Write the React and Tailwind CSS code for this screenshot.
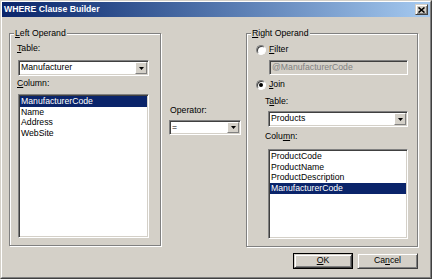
import React from "react";

const sunken =
  "border border-t-[#808080] border-l-[#808080] border-r-white border-b-white shadow-[inset_1px_1px_0_#404040,inset_-1px_-1px_0_#d4d0c8]";
const raised =
  "border border-t-[#d4d0c8] border-l-[#d4d0c8] border-r-[#404040] border-b-[#404040] shadow-[inset_1px_1px_0_#fff,inset_-1px_-1px_0_#808080]";
const etched = "border border-[#808080] shadow-[inset_1px_1px_0_#fff,1px_1px_0_#fff]";

function Arrow() {
  return (
    <svg width="5" height="3" viewBox="0 0 5 3">
      <path d="M0 0h5L2.5 3z" fill="#000" />
    </svg>
  );
}

function Combo({ value, className }) {
  return (
    <div className={`flex bg-white ${sunken} ${className}`}>
      <div className="flex-1 pl-[2px] flex items-center truncate">{value}</div>
      <div className="w-[12px] m-px flex items-center justify-center bg-[#d4d0c8] border border-t-white border-l-white border-r-[#808080] border-b-[#808080]">
        <Arrow />
      </div>
    </div>
  );
}

function ListBox({ items, selected, className }) {
  return (
    <div className={`bg-white p-px ${sunken} ${className}`}>
      {items.map((item, i) => (
        <div
          key={item}
          className={`h-[10.7px] leading-[10.7px] pl-px ${i === selected ? "bg-[#0a246a] text-white" : ""}`}
        >
          {item}
        </div>
      ))}
    </div>
  );
}

function Radio({ checked, children }) {
  return (
    <div className="flex items-center h-[11px] gap-[3px]">
      <div className="w-[10px] h-[10px] rounded-full bg-white border border-t-[#808080] border-l-[#808080] border-r-white border-b-white shadow-[inset_1px_1px_0_#404040] flex items-center justify-center">
        {checked && <div className="w-[4px] h-[4px] rounded-full bg-black" />}
      </div>
      <span className="leading-[11px]">{children}</span>
    </div>
  );
}

function Button({ children, isDefault, className }) {
  return (
    <div className={`h-[16px] ${isDefault ? "border border-black" : ""} ${className}`}>
      <div className={`h-full flex items-center justify-center bg-[#d4d0c8] ${raised}`}>{children}</div>
    </div>
  );
}

export default function App() {
  return (
    <div className="w-[432px] h-[279px] bg-[#d4d0c8] text-black text-[8.7px] font-['Liberation_Sans',Arial,sans-serif] border border-t-[#d4d0c8] border-l-[#d4d0c8] border-r-[#404040] border-b-[#404040]">
      <div className="h-full flex flex-col border border-t-white border-l-white border-r-[#808080] border-b-[#808080]">
        {/* title bar */}
        <div className="h-[15px] flex items-center justify-between bg-linear-to-r from-[#0a246a] to-[#a6caf0]">
          <span className="pl-[2px] font-bold text-white">WHERE Clause Builder</span>
          <div className={`w-[13px] h-[11px] mr-[2px] flex items-center justify-center bg-[#d4d0c8] ${raised}`}>
            <svg width="7" height="6" viewBox="0 0 7 6">
              <path d="M0.5 0.5l6 5M6.5 0.5l-6 5" stroke="#000" strokeWidth="1.6" />
            </svg>
          </div>
        </div>

        <div className="flex items-start pl-[7px] pt-[11px]">
          {/* left operand */}
          <fieldset className={`w-[152px] ${etched}`}>
            <legend className="ml-[4px] px-[1px] bg-[#d4d0c8] leading-[11px]">
              <u>L</u>eft Operand
            </legend>
            <div className="pl-[8px] pt-[4px] pb-[7px]">
              <div className="h-[11px] leading-[11px] -ml-px">
                <u>T</u>able:
              </div>
              <Combo value="Manufacturer" className="mt-[6px] w-[131px] h-[16px]" />
              <div className="mt-[2px] h-[11px] leading-[11px] -ml-px">
                <u>C</u>olumn:
              </div>
              <ListBox
                items={["ManufacturerCode", "Name", "Address", "WebSite"]}
                selected={0}
                className="mt-[5px] w-[131px] h-[144px]"
              />
            </div>
          </fieldset>

          {/* operator */}
          <div className="w-[85px] pl-[8px] pt-[77px]">
            <div className="h-[11px] leading-[11px] pl-px">Operator:</div>
            <Combo value="=" className="mt-[4px] w-[72px] h-[15px]" />
          </div>

          {/* right operand */}
          <fieldset className={`w-[172px] ${etched}`}>
            <legend className="ml-[4px] px-[1px] bg-[#d4d0c8] leading-[11px]">
              <u>R</u>ight Operand
            </legend>
            <div className="pl-[9px] pt-[5px] pb-[7px]">
              <Radio>
                <u>F</u>ilter
              </Radio>
              <div className={`mt-[5px] ml-[13px] w-[139px] h-[15px] pl-[2px] flex items-center text-[#808080] bg-[#d4d0c8] ${sunken}`}>
                @ManufacturerCode
              </div>
              <div className="mt-[4px]">
                <Radio checked>
                  <u>J</u>oin
                </Radio>
              </div>
              <div className="mt-[6px] ml-[9px] h-[11px] leading-[11px]">
                T<u>a</u>ble:
              </div>
              <Combo value="Products" className="mt-[4px] ml-[12px] w-[140px] h-[16px]" />
              <div className="mt-[4px] ml-[9px] h-[11px] leading-[11px]">
                Colu<u>m</u>n:
              </div>
              <ListBox
                items={["ProductCode", "ProductName", "ProductDescription", "ManufacturerCode"]}
                selected={3}
                className="mt-[7px] ml-[12px] w-[140px] h-[90px]"
              />
            </div>
          </fieldset>
        </div>

        {/* buttons */}
        <div className="flex justify-end gap-[4px] pr-[12px] mt-[6px]">
          <Button isDefault className="w-[60px]">
            <u>O</u>K
          </Button>
          <Button className="w-[61px]">
            Ca<u>n</u>cel
          </Button>
        </div>
      </div>
    </div>
  );
}
